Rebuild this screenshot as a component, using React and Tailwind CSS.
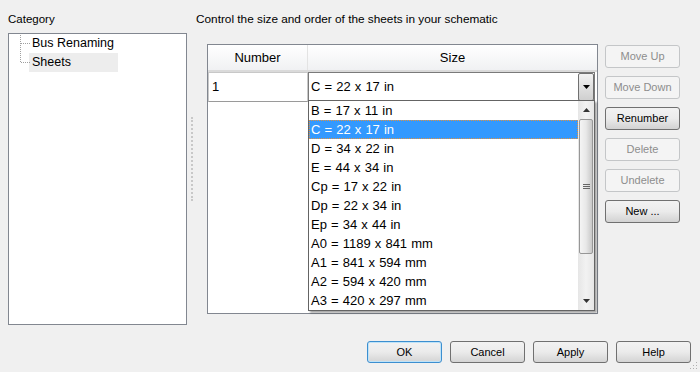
import React from "react";

const font = { fontFamily: '"Liberation Sans", Arial, sans-serif' };

function SideButton({ label, enabled }) {
  return enabled ? (
    <div className="h-[23px] w-[75px] rounded-[3px] border border-[#707070] bg-linear-to-b from-[#f2f2f2] via-[#ebebeb] to-[#d2d2d2] flex items-center justify-center text-[11px] text-black">
      {label}
    </div>
  ) : (
    <div className="h-[23px] w-[75px] rounded-[3px] border border-[#c4c6c8] bg-[#f4f4f4] flex items-center justify-center text-[11px] text-[#8d8d8d]">
      {label}
    </div>
  );
}

function BottomButton({ label, primary }) {
  return (
    <div
      className={
        "h-[22px] w-[75px] rounded-[3px] border flex items-center justify-center text-[11px] text-black bg-linear-to-b from-[#f2f2f2] via-[#ebebeb] to-[#d4d4d4] " +
        (primary ? "border-[#3c8fd0] shadow-[inset_0_0_0_1px_#bfe3f8]" : "border-[#707070]")
      }
    >
      {label}
    </div>
  );
}

const items = [
  "B = 17 x 11 in",
  "C = 22 x 17 in",
  "D = 34 x 22 in",
  "E = 44 x 34 in",
  "Cp = 17 x 22 in",
  "Dp = 22 x 34 in",
  "Ep = 34 x 44 in",
  "A0 = 1189 x 841 mm",
  "A1 = 841 x 594 mm",
  "A2 = 594 x 420 mm",
  "A3 = 420 x 297 mm",
];

export default function App() {
  return (
    <div className="relative w-[700px] h-[372px] bg-[#f0f0f0] overflow-hidden text-black" style={font}>
      <div className="flex pl-[8px]">
        {/* Left column */}
        <div className="w-[179px] flex flex-col">
          <div className="h-[33px] pt-[12px] leading-[14px] text-[11.5px]">Category</div>
          <div className="relative h-[292px] border border-[#828790] bg-white">
            <svg className="absolute left-0 top-0" width="30" height="70">
              <line x1="11.5" y1="1" x2="11.5" y2="29" stroke="#a0a0a0" strokeDasharray="1 1" />
              <line x1="12" y1="9.5" x2="21" y2="9.5" stroke="#a0a0a0" strokeDasharray="1 1" />
              <line x1="12" y1="28.5" x2="21" y2="28.5" stroke="#a0a0a0" strokeDasharray="1 1" />
            </svg>
            <div className="pl-[20px] pt-0 text-[12.5px]">
              <div className="h-[19px] leading-[19px] pl-[3px]">Bus Renaming</div>
              <div className="h-[19px] leading-[19px] pl-[3px] w-[89px] bg-[#ededed]">Sheets</div>
            </div>
          </div>
        </div>

        {/* Splitter */}
        <div className="w-[9px] pl-[4px] pt-[117px]">
          <div className="h-[84px] w-[2px] border-l-2 border-dotted border-[#c8c8c8]" />
        </div>

        {/* Right column */}
        <div className="flex flex-col">
          <div className="h-[44px] pt-[12px] leading-[14px] text-[11.8px]">
            Control the size and order of the sheets in your schematic
          </div>
          <div className="flex pl-[11px]">
            <div className="w-[391px] h-[270px] border border-[#828790] bg-white flex flex-col">
              <div className="flex h-[27px] border-b-2 border-[#dadada] bg-linear-to-b from-white to-[#f0f1f3] text-[13px]">
                <div className="w-[100px] border-r border-[#e3e3e3] flex items-center justify-center">Number</div>
                <div className="flex-1 flex items-center justify-center">Size</div>
              </div>
              <div className="flex h-[30px]">
                <div className="w-[100px] border border-[#c8c8c8] border-b-[#9a9a9a] flex items-center pl-[3px] text-[13px]">1</div>
                <div className="w-[287px] border border-[#7a7a7a] flex items-stretch">
                  <div className="flex-1 flex items-center pl-[2px] text-[13px] [word-spacing:0.5px]">C = 22 x 17 in</div>
                  <div className="w-[16px] my-0 border border-[#707070] rounded-[2px] bg-linear-to-b from-[#f2f2f2] to-[#cfcfcf] flex items-center justify-center">
                    <svg width="7" height="4"><polygon points="0,0 7,0 3.5,4" fill="#000" /></svg>
                  </div>
                </div>
              </div>
            </div>
            <div className="ml-[7px] pt-[1px] flex flex-col gap-[8px]">
              <SideButton label="Move Up" />
              <SideButton label="Move Down" />
              <SideButton label="Renumber" enabled />
              <SideButton label="Delete" />
              <SideButton label="Undelete" />
              <SideButton label="New ..." enabled />
            </div>
          </div>
        </div>
      </div>

      {/* Bottom buttons */}
      <div className="flex pl-[367px] mt-[16px] gap-[8px]">
        <BottomButton label="OK" primary />
        <BottomButton label="Cancel" />
        <BottomButton label="Apply" />
        <BottomButton label="Help" />
      </div>

      {/* Resize grip */}
      <svg className="absolute right-[2px] bottom-[2px]" width="8" height="8">
        <rect x="6" y="0" width="1" height="1" fill="#b0b0b0" />
        <rect x="3" y="3" width="1" height="1" fill="#b0b0b0" />
        <rect x="6" y="3" width="1" height="1" fill="#b0b0b0" />
        <rect x="0" y="6" width="1" height="1" fill="#b0b0b0" />
        <rect x="3" y="6" width="1" height="1" fill="#b0b0b0" />
        <rect x="6" y="6" width="1" height="1" fill="#b0b0b0" />
      </svg>

      {/* Dropdown list (overlay) */}
      <div className="absolute left-[308px] top-[100px] w-[287px] h-[211px] border border-[#646464] bg-white flex shadow-[2px_2px_2px_rgba(0,0,0,0.35)]">
        <div className="flex-1 flex flex-col text-[13px] [word-spacing:0.5px]">
          {items.map((t, i) =>
            i === 1 ? (
              <div key={t} className="h-[19px] leading-[17px] pl-[1px] bg-[#3399ff] text-white border border-dotted border-[#e39240]">
                {t}
              </div>
            ) : (
              <div key={t} className="h-[19px] leading-[19px] pl-[2px]">{t}</div>
            )
          )}
        </div>
        <div className="w-[16px] bg-linear-to-r from-[#e6e6e6] via-[#f2f2f2] to-[#e6e6e6] flex flex-col items-stretch">
          <div className="h-[18px] flex items-center justify-center">
            <svg width="7" height="4"><polygon points="3.5,0 7,4 0,4" fill="#333" /></svg>
          </div>
          <div className="h-[135px] mx-[1px] rounded-[2px] border border-[#979797] bg-linear-to-r from-[#f4f4f4] via-[#e8e8e8] to-[#c8c8c8] flex items-center justify-center">
            <svg width="7" height="6">
              <rect x="0" y="0" width="7" height="1" fill="#666" />
              <rect x="0" y="2" width="7" height="1" fill="#666" />
              <rect x="0" y="4" width="7" height="1" fill="#666" />
            </svg>
          </div>
          <div className="flex-1" />
          <div className="h-[18px] flex items-center justify-center">
            <svg width="7" height="4"><polygon points="0,0 7,0 3.5,4" fill="#333" /></svg>
          </div>
        </div>
      </div>
    </div>
  );
}
